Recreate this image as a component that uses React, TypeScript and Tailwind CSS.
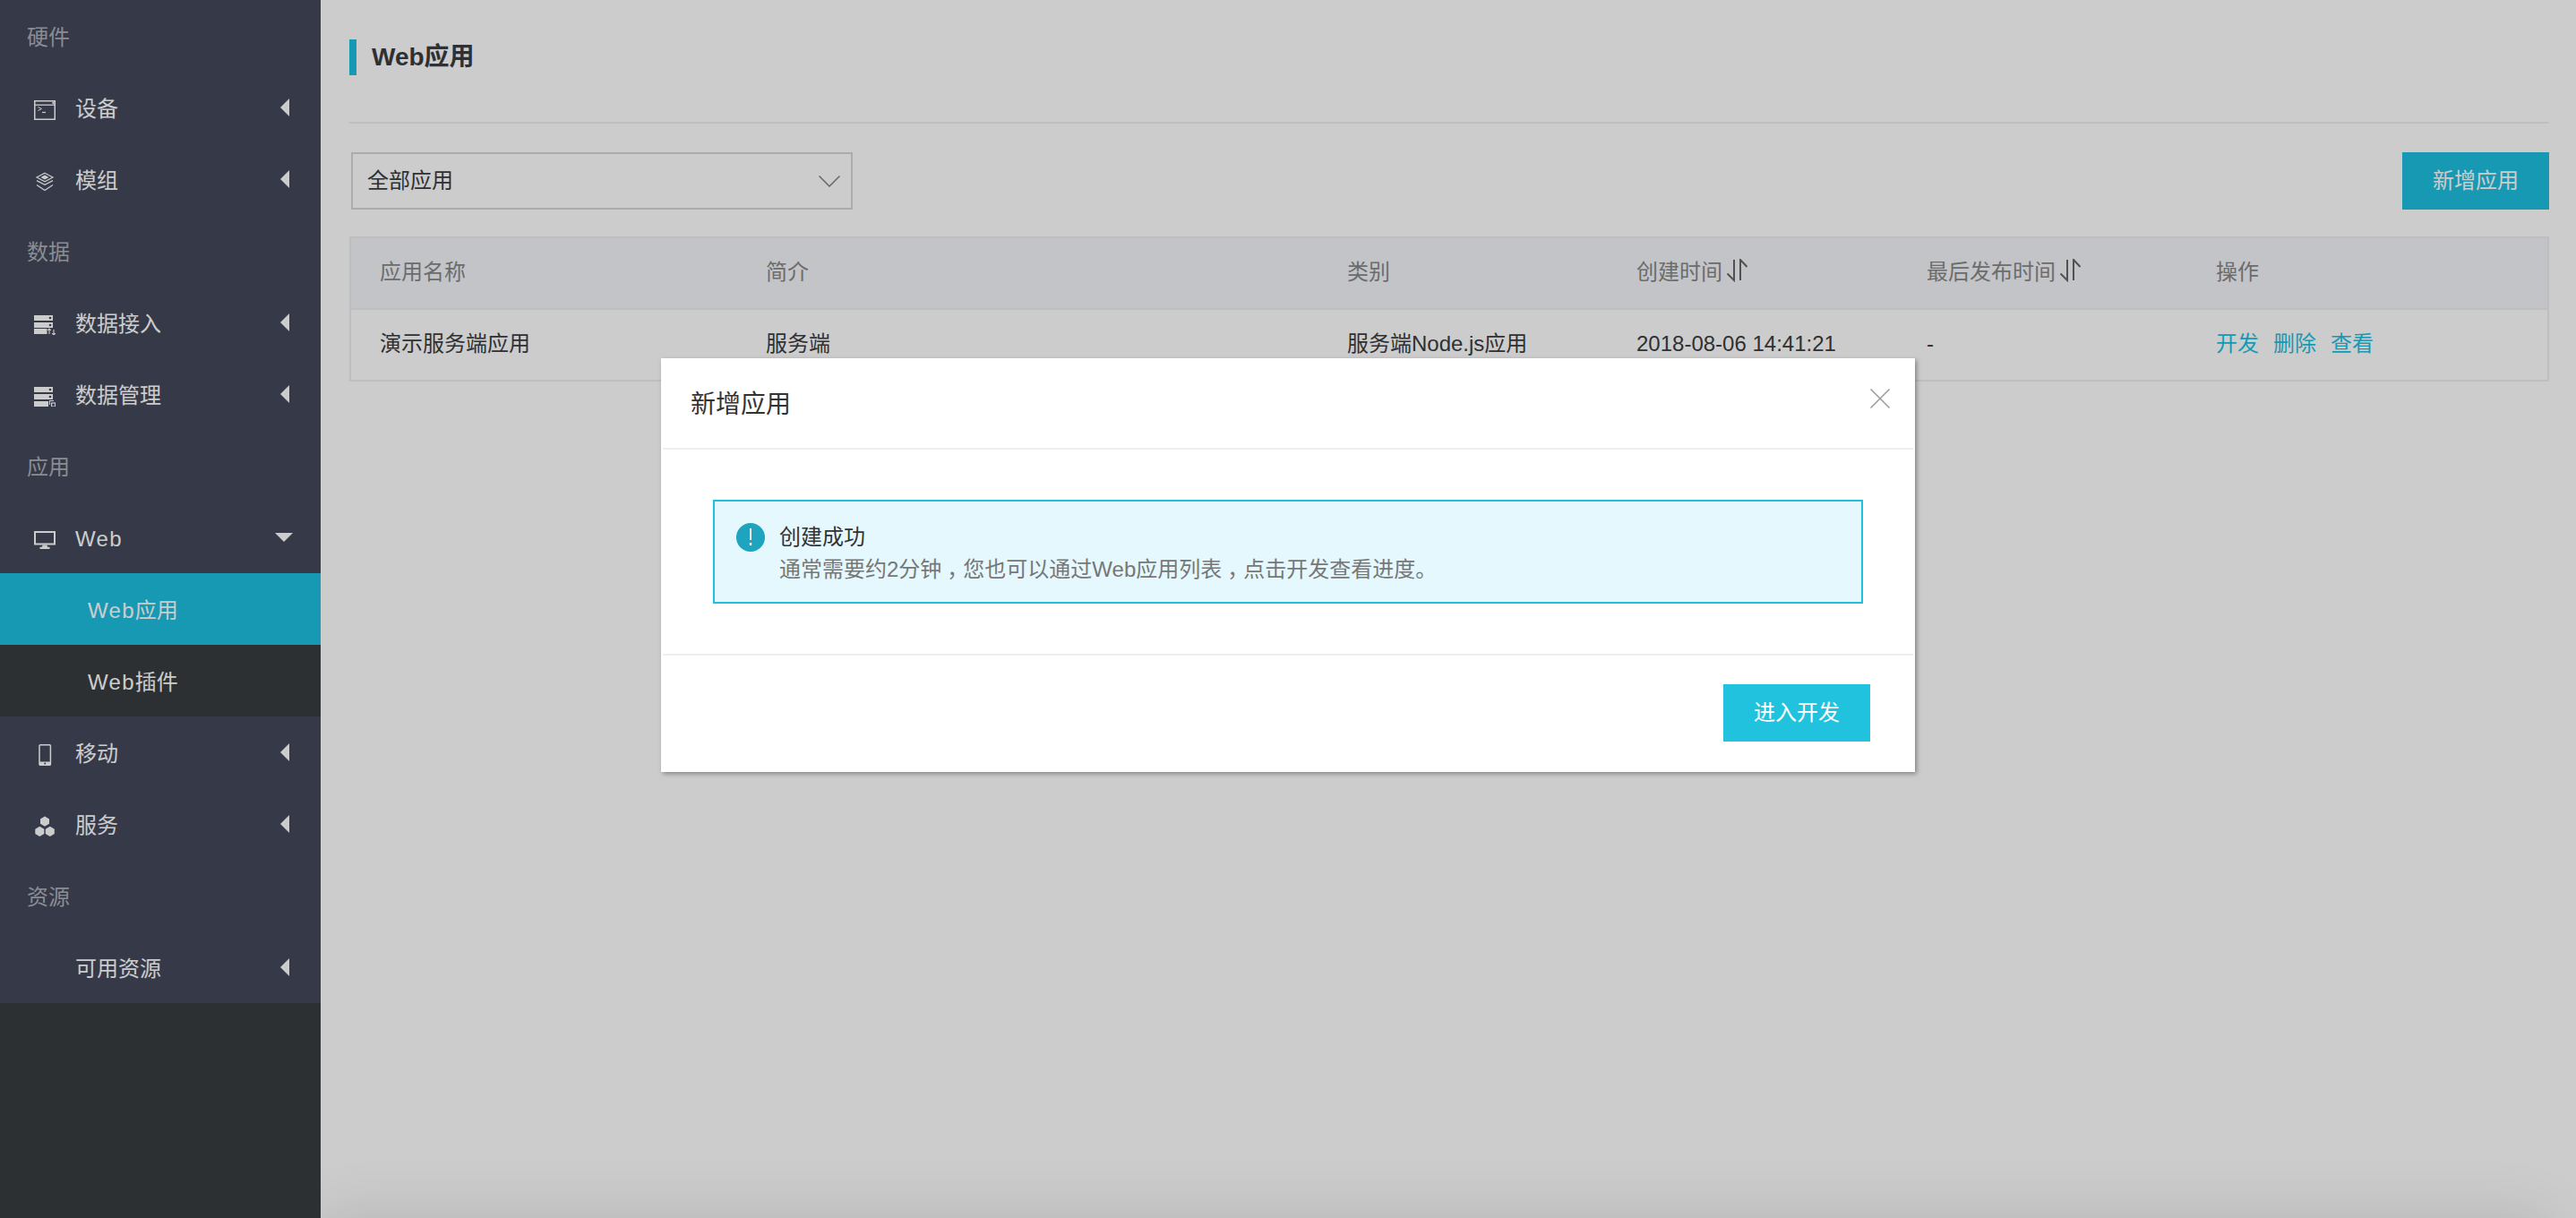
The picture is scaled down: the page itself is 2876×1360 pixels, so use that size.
import type { ReactNode } from "react";

const fontStack = "[font-family:'Liberation_Sans','Noto_Sans_CJK_SC',sans-serif]";

function TerminalIcon() {
  return (
    <svg width="24" height="22" viewBox="0 0 24 22" fill="none" stroke="#fff">
      <rect x="0.75" y="0.75" width="22.5" height="20.5" strokeWidth="1.5" />
      <path d="M1 5.2H23" strokeWidth="1.3" />
      <rect x="20.5" y="1.5" width="2" height="2.5" fill="#fff" stroke="none" />
      <path d="M4.5 7.5l4 2-4 2" strokeWidth="1" />
      <path d="M9 13.5h4" strokeWidth="1.2" />
    </svg>
  );
}

function LayersIcon() {
  return (
    <svg width="24" height="22" viewBox="0 0 24 22" fill="none" stroke="#fff" strokeWidth="1.2">
      <path d="M12 1.2L21 6l-9 4.8L3 6z" />
      <path d="M12 3.6L16.6 6 12 8.4 7.4 6z" fill="#fff" stroke="none" />
      <path d="M3 9.6l9 4.8 9-4.8" />
      <path d="M3 14.4l9 6.2 9-6.2" />
    </svg>
  );
}

function ServerIcon({ variant }: { variant: "io" | "manage" }) {
  return (
    <svg width="24" height="22" viewBox="0 0 24 22">
      <path d="M0 0h21v6H0zM0 8h21v6H0z" fill="#fff" />
      <path d={variant === "io" ? "M0 15h14.5v6H0z" : "M0 16h16v6H0z"} fill="#fff" />
      <circle cx="18" cy="3" r="1.3" fill="#43485b" />
      <circle cx="18" cy="11" r="1.3" fill="#43485b" />
      {variant === "io" ? (
        <path d="M17 21v-6m-1.8 1.8L17 15l1.8 1.8M22 16v6m-1.8-1.8L22 22l1.8-1.8" stroke="#fff" strokeWidth="1.1" fill="none" />
      ) : (
        <>
          <path d="M17.5 20v-4.5H22" stroke="#fff" strokeWidth="1.1" fill="none" />
          <rect x="19.6" y="18" width="4" height="4" fill="none" stroke="#fff" strokeWidth="1.2" />
        </>
      )}
    </svg>
  );
}

function MonitorIcon() {
  return (
    <svg width="24" height="20" viewBox="0 0 24 20" fill="none">
      <rect x="1" y="1" width="22" height="13.5" stroke="#fff" strokeWidth="2" />
      <path d="M9.5 15.5h5l.5 2.2h2.5V20h-11v-2.3H9z" fill="#fff" />
    </svg>
  );
}

function PhoneIcon() {
  return (
    <svg width="24" height="24" viewBox="0 0 24 24" fill="none">
      <rect x="6" y="0.8" width="12.4" height="22.4" rx="1" stroke="#fff" strokeWidth="1.5" />
      <path d="M6 19.5h12.4V23a1 1 0 0 1-1 1H7a1 1 0 0 1-1-1z" fill="#fff" />
      <circle cx="12.2" cy="21.5" r="1" fill="#43485b" />
    </svg>
  );
}

function HexIcon() {
  return (
    <svg width="24" height="24" viewBox="0 0 24 24" fill="#fff">
      <path d="M12 .5l5 2.9v5.4l-5 2.9-5-2.9V3.400z" />
      <path d="M6.300 11.800l5 2.900V20.100l-5 2.900-5-2.900V14.700z" />
      <path d="M17.800 11.800l5 2.900V20.100l-5 2.900-5-2.900V14.700z" />
    </svg>
  );
}

function ArrowLeft() {
  return (
    <svg width="10" height="20" viewBox="0 0 10 20">
      <polygon points="10,0 10,20 0,10" fill="#fff" />
    </svg>
  );
}

function ArrowDown() {
  return (
    <svg width="20" height="10" viewBox="0 0 20 10">
      <polygon points="0,0 20,0 10,10" fill="#fff" />
    </svg>
  );
}

function SortIcon() {
  return (
    <svg width="24" height="26" viewBox="0 0 24 26" fill="none" stroke="#666" strokeWidth="2" className="ml-1 mb-[5px] shrink-0">
      <path d="M9 1v23L1.500 16.500" />
      <path d="M16 24V1l7.500 8" />
    </svg>
  );
}

function Heading({ children }: { children: ReactNode }) {
  return <div className="h-20 pl-[30px] leading-[84px] text-[#adb0b9]">{children}</div>;
}

function MenuItem({ icon, label, open }: { icon?: ReactNode; label: ReactNode; open?: boolean }) {
  return (
    <div className={`flex h-20 items-center justify-between pl-[38px] text-white ${open ? "pr-[31px]" : "pr-[35px]"}`}>
      <div className="flex items-center">
        <span className="flex w-[46px] shrink-0 pt-[6px]">{icon}</span>
        <span className="pt-[3px]">{label}</span>
      </div>
      {open ? <ArrowDown /> : <ArrowLeft />}
    </div>
  );
}

function Sidebar() {
  return (
    <aside className="relative z-10 w-[358px] shrink-0 bg-[#383c40] text-2xl">
      <div className="bg-[#43485b]">
        <Heading>硬件</Heading>
        <MenuItem icon={<TerminalIcon />} label="设备" />
        <MenuItem icon={<LayersIcon />} label="模组" />
        <Heading>数据</Heading>
        <MenuItem icon={<ServerIcon variant="io" />} label="数据接入" />
        <MenuItem icon={<ServerIcon variant="manage" />} label="数据管理" />
        <Heading>应用</Heading>
        <MenuItem icon={<MonitorIcon />} label={<span className="tracking-[1.3px]">Web</span>} open />
        <div className="h-20 bg-[#1fc0e0] pl-[98px] leading-[84px] text-white">
          <span className="tracking-[1.3px]">Web</span>应用
        </div>
        <div className="h-20 bg-[#383c40] pl-[98px] leading-[84px] text-white">
          <span className="tracking-[1.3px]">Web</span>插件
        </div>
        <MenuItem icon={<PhoneIcon />} label="移动" />
        <MenuItem icon={<HexIcon />} label="服务" />
        <Heading>资源</Heading>
        <MenuItem label="可用资源" />
      </div>
    </aside>
  );
}

const tableCols = "grid grid-cols-[431px_649px_323px_324px_323px_1fr]";

function AppTable() {
  return (
    <div className="border-2 border-[#eeeeee] text-2xl">
      <div className={`${tableCols} h-[78px] items-center bg-[#f4f5fb] pb-[2px] pl-8 text-[#888888]`}>
        <div>应用名称</div>
        <div>简介</div>
        <div>类别</div>
        <div className="flex items-center">
          创建时间
          <SortIcon />
        </div>
        <div className="flex items-center">
          最后发布时间
          <SortIcon />
        </div>
        <div>操作</div>
      </div>
      <div className={`${tableCols} h-[80px] items-center border-t-2 border-[#eeeeee] pb-[2px] pl-8 text-[#3a3c40]`}>
        <div>演示服务端应用</div>
        <div>服务端</div>
        <div>服务端Node.js应用</div>
        <div>2018-08-06 14:41:21</div>
        <div>-</div>
        <div className="flex gap-4 text-[#1fc0e0]">
          <span>开发</span>
          <span>删除</span>
          <span>查看</span>
        </div>
      </div>
    </div>
  );
}

function Main() {
  return (
    <main className="relative flex-1 overflow-hidden bg-white pl-8 pr-[30px]">
      <div className="flex h-[138px] items-start border-b-2 border-[#eeeeee] pt-11">
        <div className="h-10 w-2 bg-[#1fc0e0]" />
        <h1 className="ml-[17px] text-[28px] font-bold leading-10 text-[#3a3c40]">Web应用</h1>
      </div>
      <div className="mt-8 flex items-center justify-between pl-[2px]">
        <div className="flex h-16 w-[560px] items-center justify-between border-2 border-[#d8d8d8] pl-4 pr-3 text-2xl text-[#3a3c40]">
          全部应用
          <svg width="24" height="13" viewBox="0 0 24 13" fill="none" stroke="#808080" strokeWidth="1.5">
            <path d="M0.5 0.5L12 12 23.500 0.5" />
          </svg>
        </div>
        <button className="h-16 w-[164px] bg-[#1fc0e0] text-2xl text-white">新增应用</button>
      </div>
      <div className="mt-[30px]">
        <AppTable />
      </div>
      {/* bar below the fold, only its shadow reaches the page */}
      <div className="absolute left-0 right-[30px] top-full h-20 shadow-[0_0_70px_rgba(0,0,0,0.12)]" />
    </main>
  );
}

function Modal() {
  const comma = "inline-block px-[6px] [font-feature-settings:'halt']";
  return (
    <div className="absolute inset-0 z-20 bg-black/20">
      <div className="mx-auto mt-[400px] h-[462px] w-[1400px] border-2 border-white bg-white shadow-[2px_2px_5px_rgba(0,0,0,0.35)]">
        <div className="flex h-[100px] items-start justify-between border-b-2 border-[#eeeeee] pl-[31px] pr-[25px]">
          <div className="pt-8 text-[28px] leading-9 text-[#333333]">新增应用</div>
          <svg width="24" height="24" viewBox="0 0 24 24" fill="none" stroke="#999999" strokeWidth="1.5" className="mt-[31px]">
            <path d="M1.500 1.500l21 21M22.500 1.500l-21 21" />
          </svg>
        </div>
        <div className="h-[230px] border-b-2 border-[#eeeeee] px-[56px] pt-14">
          <div className="flex h-[116px] w-[1284px] items-start border-2 border-[#20c1de] bg-[#e4f8fd] pl-6 pt-[22px]">
            <div className="mt-[2px] flex h-8 w-8 shrink-0 items-center justify-center rounded-full bg-[#1fa4bf]">
              <svg width="4" height="20" viewBox="0 0 4 20" fill="#fff">
                <rect x="1" y="0" width="2" height="13" />
                <rect x="0.800" y="16" width="2.400" height="3" />
              </svg>
            </div>
            <div className="ml-4 text-2xl leading-9">
              <div className="text-[#333333]">创建成功</div>
              <div className="text-[#777777]">
                通常需要约2分钟<span className={comma}>，</span>您也可以通过Web应用列表<span className={comma}>，</span>点击开发查看进度。
              </div>
            </div>
          </div>
        </div>
        <div className="flex justify-end pr-[48px] pt-8">
          <button className="h-16 w-[164px] bg-[#20c2de] text-2xl text-white">进入开发</button>
        </div>
      </div>
    </div>
  );
}

export default function App() {
  return (
    <div className={`relative flex h-[1360px] w-full overflow-hidden bg-white ${fontStack}`}>
      <Sidebar />
      <Main />
      <Modal />
    </div>
  );
}
